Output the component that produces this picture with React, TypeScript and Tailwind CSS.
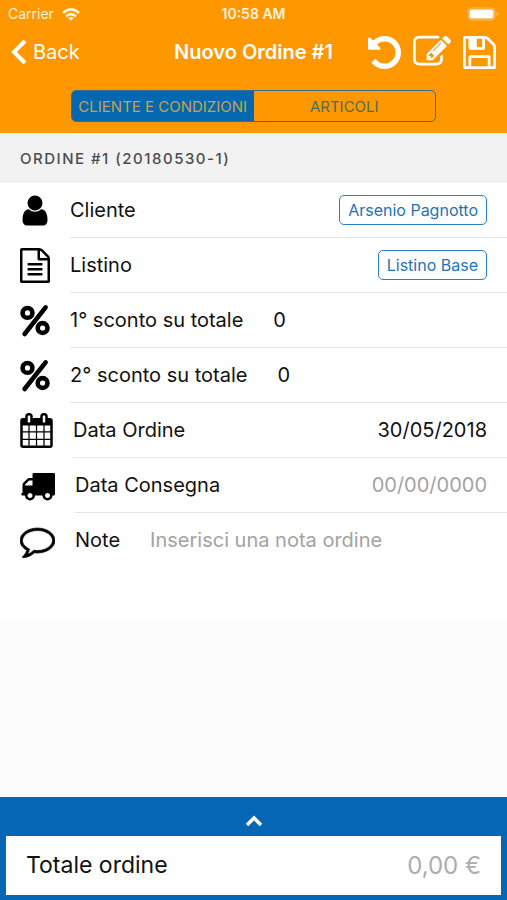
import { useState, type ReactNode } from "react";

const paths = {
  undo: "M1664 896q0 156-61 298t-164 245-245 164-298 61q-172 0-327-72.5t-264-204.5q-7-10-6.5-22.5t8.5-20.5l137-138q10-9 25-9 16 2 23 12 73 95 179 147t225 52q104 0 198.5-40.5t163.5-109.5 109.5-163.5 40.5-198.5-40.5-198.5-109.5-163.5-163.5-109.5-198.5-40.5q-98 0-188 35.5t-160 101.5l137 138q31 30 14 69-17 40-59 40h-448q-26 0-45-19t-19-45v-448q0-42 40-59 39-17 69 14l130 129q107-101 244.5-156.5t284.5-55.5q156 0 298 61t245 164 164 245 61 298z",
  edit: "M888 1184l116-116-152-152-116 116v56h96v96h56zm440-720q-16-16-33 1l-350 350q-17 17-1 33t33-1l350-350q17-17 1-33zm80 594v190q0 119-84.5 203.5t-203.5 84.5h-832q-119 0-203.5-84.5t-84.5-203.5v-832q0-119 84.5-203.5t203.5-84.5h832q63 0 117 25 15 7 18 23 3 17-9 29l-49 49q-14 14-32 8-23-6-45-6h-832q-66 0-113 47t-47 113v832q0 66 47 113t113 47h832q66 0 113-47t47-113v-126q0-13 9-22l64-64q15-15 35-7t20 29zm-96-738l288 288-672 672h-288v-288zm444 132l-92 92-288-288 92-92q28-28 68-28t68 28l152 152q28 28 28 68t-28 68z",
  save: "M512 1536h768v-384h-768v384zm896 0h128v-896q0-14-10-38.5t-20-34.5l-281-281q-10-10-34-20t-39-10v416q0 40-28 68t-68 28h-576q-40 0-68-28t-28-68v-416h-128v1280h128v-416q0-40 28-68t68-28h832q40 0 68 28t28 68v416zm-384-928v-320q0-13-9.5-22.5t-22.5-9.5h-192q-13 0-22.5 9.5t-9.5 22.5v320q0 13 9.5 22.5t22.5 9.5h192q13 0 22.5-9.5t9.5-22.5zm640 32v928q0 40-28 68t-68 28h-1344q-40 0-68-28t-28-68v-1344q0-40 28-68t68-28h928q40 0 88 20t76 48l280 280q28 28 48 76t20 88z",
  user: "M1536 1399q0 109-62.5 187t-150.5 78h-854q-88 0-150.5-78t-62.5-187q0-85 8.5-160.5t31.5-152 58.5-131 94-89 134.5-34.5q131 128 313 128t313-128q76 0 134.5 34.5t94 89 58.5 131 31.5 152 8.5 160.5zm-256-887q0 159-112.5 271.5t-271.5 112.5-271.5-112.5-112.5-271.5 112.5-271.5 271.5-112.5 271.5 112.5 112.5 271.5z",
  file: "M1596 380q28 28 48 76t20 88v1152q0 40-28 68t-68 28h-1344q-40 0-68-28t-28-68v-1600q0-40 28-68t68-28h896q40 0 88 20t76 48zm-444-244v376h376q-10-29-22-41l-313-313q-12-12-41-22zm384 1528v-1024h-416q-40 0-68-28t-28-68v-416h-768v1536h1280zm-1024-864q0-14 9-23t23-9h704q14 0 23 9t9 23v64q0 14-9 23t-23 9h-704q-14 0-23-9t-9-23v-64zm736 224q14 0 23 9t9 23v64q0 14-9 23t-23 9h-704q-14 0-23-9t-9-23v-64q0-14 9-23t23-9h704zm0 256q14 0 23 9t9 23v64q0 14-9 23t-23 9h-704q-14 0-23-9t-9-23v-64q0-14 9-23t23-9h704z",
  calendar: "M192 1664h288v-288h-288v288zm352 0h320v-288h-320v288zm-352-352h288v-320h-288v320zm352 0h320v-320h-320v320zm-352-384h288v-288h-288v288zm736 736h320v-288h-320v288zm-384-736h320v-288h-320v288zm768 736h288v-288h-288v288zm-384-352h320v-320h-320v320zm-352-864v-288q0-13-9.5-22.5t-22.5-9.5h-64q-13 0-22.5 9.5t-9.5 22.5v288q0 13 9.5 22.5t22.5 9.5h64q13 0 22.5-9.5t9.5-22.5zm736 864h288v-320h-288v320zm-384-384h320v-288h-320v288zm384 0h288v-288h-288v288zm32-480v-288q0-13-9.5-22.5t-22.5-9.5h-64q-13 0-22.5 9.5t-9.5 22.5v288q0 13 9.5 22.5t22.5 9.5h64q13 0 22.5-9.5t9.5-22.5zm384-64v1280q0 52-38 90t-90 38h-1408q-52 0-90-38t-38-90v-1280q0-52 38-90t90-38h128v-96q0-66 47-113t113-47h64q66 0 113 47t47 113v96h384v-96q0-66 47-113t113-47h64q66 0 113 47t47 113v96h128q52 0 90 38t38 90z",
  truck: "M640 1408q0-52-38-90t-90-38-90 38-38 90 38 90 90 38 90-38 38-90zm-384-512h384v-256h-158q-13 0-22 9l-195 195q-9 9-9 22v30zm1280 512q0-52-38-90t-90-38-90 38-38 90 38 90 90 38 90-38 38-90zm256-1088v1024q0 15-4 26.5t-13.5 18.5-16.5 11.5-23.5 6-22.5 2-25.5 0-22.5-.5q0 106-75 181t-181 75-181-75-75-181h-384q0 106-75 181t-181 75-181-75-75-181h-64q-3 0-22.5.5t-25.5 0-22.5-2-23.5-6-16.5-11.5-13.5-18.5-4-26.5q0-26 19-45t45-19v-320q0-8-.5-35t0-38 2.5-34.5 6.5-37 14-30.5 22.5-30l198-198q19-19 50.5-32t58.5-13h160v-192q0-26 19-45t45-19h1024q26 0 45 19t19 45z",
  comment: "M896 384q-204 0-381.5 69.5t-282 187.5-104.5 255q0 112 71.5 213.5t201.5 175.5l87 50-27 96q-24 91-70 172 152-63 275-171l43-38 57 6q69 8 130 8 204 0 381.5-69.5t282-187.5 104.5-255-104.5-255-282-187.5-381.5-69.5zm896 512q0 174-120 321.5t-326 233-450 85.5q-70 0-145-8-198 175-460 242-49 14-114 22h-5q-15 0-27-10.5t-16-27.5v-1q-3-4-.5-12t2-10 4.5-9.5l6-9 7-8.5 8-9q7-8 31-34.5t34.5-38 31-39.5 32.5-51 27-59 26-76q-157-89-247.5-220t-90.5-281q0-174 120-321.5t326-233 450-85.5 450 85.5 326 233 120 321.5z",
};

type IconName = keyof typeof paths;

function Icon({ name, box = "0 0 1792 1792", className }: { name: IconName; box?: string; className: string }) {
  return (
    <svg viewBox={box} className={`shrink-0 fill-current ${className}`} aria-hidden="true">
      <path d={paths[name]} />
    </svg>
  );
}

function PercentIcon() {
  return (
    <svg viewBox="0 0 30 35" className="h-[35px] w-[30px] shrink-0" fill="none" stroke="currentColor" aria-hidden="true">
      <circle cx="7.5" cy="9.9" r="4.9" strokeWidth="4.6" />
      <circle cx="22.6" cy="25" r="4.9" strokeWidth="4.6" />
      <path d="M25.600 4.400L4.600 31" strokeWidth="4.600" strokeLinecap="round" />
    </svg>
  );
}

function Row({
  icon,
  label,
  htmlFor,
  last = false,
  children,
}: {
  icon: ReactNode;
  label: string;
  htmlFor: string;
  last?: boolean;
  children: ReactNode;
}) {
  return (
    <div className="flex h-[55px] items-center gap-5 pl-5 text-black">
      {icon}
      <div
        className={`flex h-full min-w-0 flex-1 items-center gap-[30px] border-b pr-5 text-[#111111] ${
          last ? "border-transparent" : "border-[#e6e6e6]"
        }`}
      >
        <label htmlFor={htmlFor} className="shrink-0">
          {label}
        </label>
        {children}
      </div>
    </div>
  );
}

const chip = "ml-auto h-[30px] rounded-[5px] border border-[#2a7fc4] px-2 text-base text-[#1d73bb]";
const field = "min-w-0 flex-1 bg-transparent outline-none placeholder:text-[#a3a3a3]";

export default function App() {
  const [tab, setTab] = useState(0);

  return (
    <div className="flex min-h-screen flex-col bg-[#fcfcfc] font-[Inter,'Liberation_Sans',sans-serif] text-xl text-[#111111]">
      <header className="h-[133px] bg-[#ff9800] text-white">
        <div className="grid h-7 grid-cols-3 items-center px-2 text-sm text-[#fff3dc]">
          <div className="flex items-center gap-2">
            <span>Carrier</span>
            <svg viewBox="0 0 18 13" className="h-[13px] w-[18px]" fill="none" stroke="currentColor" strokeWidth="2.6" aria-hidden="true">
              <path d="M1 5Q9-2.2 17 5" />
              <path d="M4 8.400q5-4.400 10 0" />
              <path d="M6.2 10q2.8-2.2 5.600 0L9 12.800z" fill="currentColor" stroke="none" />
            </svg>
          </div>
          <span className="text-center font-semibold">10:58 AM</span>
          <svg viewBox="0 0 32 14" className="h-[14px] w-8 justify-self-end" aria-hidden="true">
            <rect x="1" y="1" width="27" height="12" rx="3.5" fill="none" stroke="#ffc266" />
            <rect x="2.5" y="2.5" width="24" height="9" rx="2" fill="#fff" />
            <path d="M29.5 5v4q1.800-.6 1.800-2t-1.800-2z" fill="#ffc266" />
          </svg>
        </div>

        <div className="grid h-12 grid-cols-[1fr_auto_1fr] items-center px-[11px]">
          <button type="button" className="flex items-center gap-[6px] justify-self-start">
            <svg viewBox="0 0 16 26" className="h-[26px] w-4" fill="none" stroke="currentColor" strokeWidth="4" aria-hidden="true">
              <path d="M14 2L3 13l11 11" />
            </svg>
            Back
          </button>
          <h1 className="font-semibold">Nuovo Ordine #1</h1>
          <div className="flex items-center gap-3 justify-self-end">
            <button type="button" aria-label="Annulla">
              <Icon name="undo" box="128 128 1536 1536" className="size-[33px]" />
            </button>
            <button type="button" aria-label="Modifica">
              <Icon name="edit" className="size-[38px]" />
            </button>
            <button type="button" aria-label="Salva">
              <Icon name="save" box="128 128 1536 1536" className="size-[33px]" />
            </button>
          </div>
        </div>

        <div className="mx-auto mt-[14px] grid h-8 w-[72%] grid-cols-2 overflow-hidden rounded-[5px] border border-[#33708a] text-[15px]">
          {["CLIENTE E CONDIZIONI", "ARTICOLI"].map((name, i) => (
            <button
              key={name}
              type="button"
              aria-pressed={tab === i}
              onClick={() => setTab(i)}
              className={`whitespace-nowrap ${tab === i ? "bg-[#0567b0] text-[#c4a34e]" : "text-[#4f6c58]"}`}
            >
              {name}
            </button>
          ))}
        </div>
      </header>

      <main>
        <h2 className="flex h-[50px] items-center bg-[#f2f2f2] px-5 text-[15px] font-medium tracking-widest text-[#4d4d4d]">
          ORDINE #1 (20180530-1)
        </h2>
        <div className="bg-white pb-[52px]">
          <Row
            icon={<Icon name="user" box="128 0 1536 1792" className="h-[35px] w-[30px]" />}
            label="Cliente"
            htmlFor="cliente"
          >
            <button id="cliente" type="button" className={chip}>
              Arsenio Pagnotto
            </button>
          </Row>
          <Row
            icon={<Icon name="file" box="128 0 1536 1792" className="h-[35px] w-[30px]" />}
            label="Listino"
            htmlFor="listino"
          >
            <button id="listino" type="button" className={chip}>
              Listino Base
            </button>
          </Row>
          <Row icon={<PercentIcon />} label="1° sconto su totale" htmlFor="sconto1">
            <input id="sconto1" inputMode="numeric" defaultValue="0" className={field} />
          </Row>
          <Row icon={<PercentIcon />} label="2° sconto su totale" htmlFor="sconto2">
            <input id="sconto2" inputMode="numeric" defaultValue="0" className={field} />
          </Row>
          <Row
            icon={<Icon name="calendar" box="64 0 1664 1792" className="h-[35px] w-[33px]" />}
            label="Data Ordine"
            htmlFor="data-ordine"
          >
            <input id="data-ordine" defaultValue="30/05/2018" className={`${field} text-right`} />
          </Row>
          <Row icon={<Icon name="truck" className="size-[35px]" />} label="Data Consegna" htmlFor="data-consegna">
            <input id="data-consegna" placeholder="00/00/0000" className={`${field} text-right`} />
          </Row>
          <Row
            icon={<Icon name="comment" className="size-[35px] stroke-current stroke-[36]" />}
            label="Note"
            htmlFor="note"
            last
          >
            <input id="note" placeholder="Inserisci una nota ordine" className={field} />
          </Row>
        </div>
      </main>

      <footer className="mt-auto bg-[#0567b3] px-[6px] pb-[5px]">
        <button type="button" aria-label="Mostra dettagli" className="flex h-[39px] w-full items-center justify-center pt-2 text-white">
          <svg viewBox="0 0 18 12" className="h-3 w-[18px]" fill="none" stroke="currentColor" strokeWidth="3.5" aria-hidden="true">
            <path d="M2 10l7-7 7 7" />
          </svg>
        </button>
        <div className="flex h-[59px] items-center justify-between bg-white px-5 text-[23px]">
          <span>Totale ordine</span>
          <span className="text-2xl text-[#adadad]">0,00 €</span>
        </div>
      </footer>
    </div>
  );
}
